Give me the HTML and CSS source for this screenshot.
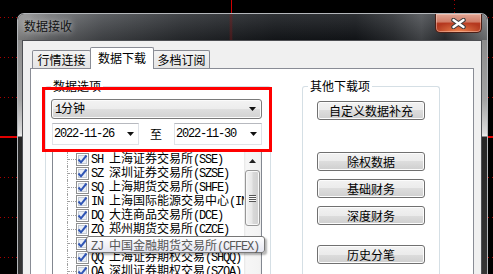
FILE: index.html
```html
<!DOCTYPE html>
<html>
<head>
  <meta charset="utf-8">
  <title>数据接收</title>
  <link rel="stylesheet" href="styles.css">
</head>
<body>
  <svg class="defs" aria-hidden="true">
    <symbol id="chk" viewBox="0 0 13 13">
      <rect x="0.5" y="0.5" width="12" height="12" fill="#fff" stroke="#8e8f8f"/>
      <rect x="2.5" y="2.5" width="8" height="8" fill="#e9eef5" stroke="#c3cad3"/>
      <path d="M2.5 6.5l2.5 2.8L10.5 2.5" fill="none" stroke="#2f55b5" stroke-width="2"/>
    </symbol>
    <symbol id="down" viewBox="0 0 7 4">
      <path d="M0 0h7L3.5 4z"/>
    </symbol>
  </svg>

  <div class="window">
    <div class="titlebar">
      <span class="title">数据接收</span>
      <button class="close-btn" aria-label="关闭">
        <svg viewBox="0 0 15 11" width="15" height="11">
          <path d="M2.5 2l10 7m0-7l-10 7" stroke="#3c3c3c" stroke-width="4.5" stroke-linecap="round"/>
          <path d="M2.5 2l10 7m0-7l-10 7" stroke="#fff" stroke-width="2.4" stroke-linecap="round"/>
        </svg>
      </button>
    </div>

    <div class="frame">
      <div class="client">
        <div class="tabs">
          <div class="tab">行情连接</div>
          <div class="tab active">数据下载</div>
          <div class="tab">多档订阅</div>
        </div>

        <div class="pane">
          <fieldset class="group group-data">
            <legend>数据选项</legend>
            <div class="combo">
              <span><span class="code">1</span>分钟</span>
              <svg class="arrow"><use href="#down"/></svg>
            </div>
            <div class="date-row">
              <div class="date">
                <span class="code">2022-11-26</span>
                <svg class="arrow"><use href="#down"/></svg>
              </div>
              <span class="date-sep">至</span>
              <div class="date">
                <span class="code">2022-11-30</span>
                <svg class="arrow"><use href="#down"/></svg>
              </div>
            </div>
            <div class="tree">
              <ul class="nodes">
                <li class="node"><span class="branch"></span><svg class="chk"><use href="#chk"/></svg><span class="node-text"><span class="code">SH </span>上海证券交易所<span class="code">(SSE)</span></span></li>
                <li class="node"><span class="branch"></span><svg class="chk"><use href="#chk"/></svg><span class="node-text"><span class="code">SZ </span>深圳证券交易所<span class="code">(SZSE)</span></span></li>
                <li class="node"><span class="branch"></span><svg class="chk"><use href="#chk"/></svg><span class="node-text"><span class="code">SQ </span>上海期货交易所<span class="code">(SHFE)</span></span></li>
                <li class="node"><span class="branch"></span><svg class="chk"><use href="#chk"/></svg><span class="node-text"><span class="code">IN </span>上海国际能源交易中心<span class="code">(INE)</span></span></li>
                <li class="node"><span class="branch"></span><svg class="chk"><use href="#chk"/></svg><span class="node-text"><span class="code">DQ </span>大连商品交易所<span class="code">(DCE)</span></span></li>
                <li class="node"><span class="branch"></span><svg class="chk"><use href="#chk"/></svg><span class="node-text"><span class="code">ZQ </span>郑州期货交易所<span class="code">(CZCE)</span></span></li>
                <li class="node"><span class="branch"></span><svg class="chk"><use href="#chk"/></svg><span class="node-text"><span class="code">ZJ </span>中国金融期货交易所<span class="code">(CFFEX)</span></span></li>
                <li class="node"><span class="branch"></span><svg class="chk"><use href="#chk"/></svg><span class="node-text"><span class="code">QQ </span>上海证券期权交易<span class="code">(SHQQ)</span></span></li>
                <li class="node"><span class="branch"></span><svg class="chk"><use href="#chk"/></svg><span class="node-text"><span class="code">QA </span>深圳证券期权交易<span class="code">(SZQA)</span></span></li>
              </ul>
              <div class="vscroll">
                <span class="vscroll-up">
                  <svg viewBox="0 0 7 4" width="7" height="4"><path d="M0 4h7L3.5 0z"/></svg>
                </span>
                <span class="vscroll-thumb"><span class="grip"></span></span>
              </div>
              <div class="tooltip"><span class="code">ZJ </span>中国金融期货交易所<span class="code">(CFFEX)</span></div>
            </div>
          </fieldset>

          <fieldset class="group group-other">
            <legend>其他下载项</legend>
            <div class="btn-set">
              <button class="btn">自定义数据补充</button>
            </div>
            <div class="btn-set btn-set-finance">
              <button class="btn">除权数据</button>
              <button class="btn">基础财务</button>
              <button class="btn">深度财务</button>
            </div>
            <div class="btn-set btn-set-tick">
              <button class="btn">历史分笔</button>
            </div>
          </fieldset>
        </div>
      </div>
    </div>
  </div>

  <div class="mark"></div>
</body>
</html>
```

FILE: styles.css
```css
html, body {
  margin: 0;
  height: 100%;
  overflow: hidden;
}

body {
  position: relative;
  font-family: "Noto Sans CJK SC", sans-serif;
  font-size: 12px;
  line-height: 14px;
  color: #000;
  background:
    linear-gradient(#d00000, #d00000) 231px 0 / 1px 13px no-repeat,
    linear-gradient(#e00000, #e00000) 0 136px / 100% 2px no-repeat,
    conic-gradient(at 1px 1px, transparent 75%, #a80000 0) 0 17px / 4px 40px,
    conic-gradient(at 1px 1px, transparent 75%, #a80000 0) 454px 0 / 493px 4px,
    #000;
}

.defs {
  position: absolute;
  width: 0;
  height: 0;
}

.code {
  font-family: "Liberation Mono", monospace;
  letter-spacing: -1.2px;
}

/* window chrome */

.window {
  position: absolute;
  left: 17px;
  top: 13px;
  width: 471px;
  height: 261px;
  box-sizing: border-box;
  display: flex;
  flex-direction: column;
  border: 1px solid #b4b7bb;
  border-bottom: none;
  border-radius: 7px 7px 0 0;
  overflow: hidden;
}

.titlebar {
  display: flex;
  align-items: flex-start;
  flex-shrink: 0;
  height: 26px;
  background:
    linear-gradient(to right, transparent 211px, rgba(140, 20, 20, 0.45) 213px, transparent 215px),
    linear-gradient(rgba(255, 255, 255, 0.1), rgba(0, 0, 0, 0.2)),
    linear-gradient(to right, #979797, #707275 7%, #4b4e52 18%, #2c2f33 35%, #171a1e 55%, #15181c 72%, #2e3135 80%, #4d5054 86%, #2e3135 91%, #808285);
}

.title {
  padding: 5px 0 0 6px;
  color: #111;
  text-shadow: 0 0 6px rgba(255, 255, 255, 0.6), 0 0 10px rgba(255, 255, 255, 0.35);
}

.close-btn {
  display: flex;
  align-items: center;
  justify-content: center;
  width: 47px;
  height: 19px;
  margin-left: auto;
  margin-right: 5px;
  padding: 0;
  border: 1px solid #4a1f17;
  border-top: none;
  border-radius: 0 0 5px 5px;
  background:
    radial-gradient(ellipse 60% 55% at 50% 100%, rgba(255, 150, 90, 0.85), transparent),
    linear-gradient(#e2a695, #d07c66 45%, #b73a20 50%, #a52e18);
  box-shadow: inset 0 0 0 1px rgba(255, 215, 200, 0.45);
}

.frame {
  flex: 1;
  min-height: 0;
  padding: 0 5px 0 4px;
  background: linear-gradient(#8c8c8c 0, #a4a4a4 60px, #dcdcdc 93px, #efefef 96px, #262626 97px, #353535);
}

.client {
  display: flex;
  flex-direction: column;
  height: 100%;
  box-sizing: border-box;
  padding: 6px 7px 0;
  border: 1px solid #4d4f53;
  border-bottom: none;
  background: #f0f0f0;
}

/* tabs */

.tabs {
  display: flex;
  align-items: flex-end;
  flex-shrink: 0;
  height: 21px;
  padding-left: 2px;
}

.tab {
  width: 59px;
  height: 18px;
  box-sizing: border-box;
  border: 1px solid #898c95;
  border-bottom: none;
  border-radius: 2px 2px 0 0;
  background: linear-gradient(#f3f3f3, #e4e4e4);
  line-height: 17px;
  text-align: center;
}

.tab.active {
  position: relative;
  z-index: 1;
  width: 64px;
  height: 22px;
  margin: 0 -1px -1px -1px;
  background: #fff;
  line-height: 20px;
}

.tab:last-child {
  width: 57px;
}

.pane {
  display: flex;
  align-items: flex-start;
  gap: 31px;
  flex: 1;
  min-height: 0;
  padding-left: 14px;
  border: 1px solid #898c95;
  border-bottom: none;
  background: #fff;
  overflow: hidden;
}

/* group boxes */

.group {
  box-sizing: border-box;
  min-width: 0;
  height: 195px;
  margin: 10px 0 0;
  padding: 6px 8px 0 5px;
  border: 1px solid #d5dfe5;
  border-bottom: none;
  border-radius: 3px 3px 0 0;
}

.group legend {
  padding: 0 2px;
  line-height: 14px;
}

.group-data {
  width: 226px;
}

.group-other {
  width: 138px;
  padding-top: 8px;
}

.arrow {
  width: 7px;
  height: 4px;
  flex-shrink: 0;
  fill: #111;
}

.combo {
  display: flex;
  align-items: center;
  justify-content: space-between;
  height: 20px;
  box-sizing: border-box;
  padding: 0 5px 0 3px;
  border: 1px solid #7a7a7a;
  border-radius: 3px;
  background: linear-gradient(#f3f3f3, #ececec 50%, #dfdfdf 50%, #d2d2d2);
  box-shadow: inset 0 0 0 1px #fbfbfb;
}

.date-row {
  display: flex;
  align-items: center;
  height: 22px;
  margin: 4px 0 0 1px;
}

.date {
  display: flex;
  align-items: center;
  justify-content: space-between;
  width: 87px;
  height: 22px;
  box-sizing: border-box;
  padding: 0 4px 0 1px;
  border: 1px solid #dfe2e7;
  border-top-color: #b7b9bf;
  background: #fff;
}

.date:last-child {
  width: 88px;
}

.date-sep {
  margin: 0 12px 0 11px;
}

/* tree view */

.tree {
  position: relative;
  display: flex;
  width: 210px;
  height: 123px;
  box-sizing: border-box;
  margin: 6px 0 0 1px;
  border: 1px solid #828790;
  border-bottom: none;
  background: #fff;
}

.nodes {
  flex: 1;
  min-width: 0;
  margin: 0;
  padding: 0;
  list-style: none;
  overflow: hidden;
}

.node {
  display: flex;
  align-items: center;
  height: 14px;
  white-space: nowrap;
}

.branch {
  flex-shrink: 0;
  align-self: stretch;
  width: 8px;
  margin-left: 14px;
  border-left: 1px dotted #a0a0a0;
}

.branch::after {
  content: "";
  display: block;
  margin-top: 7px;
  border-top: 1px dotted #a0a0a0;
}

.chk {
  flex-shrink: 0;
  width: 13px;
  height: 13px;
}

.node-text {
  margin-left: 2px;
}

.vscroll {
  display: flex;
  flex-direction: column;
  align-items: center;
  flex-shrink: 0;
  width: 17px;
  background: linear-gradient(to right, #e6e6e6, #f6f6f6 2px, #f3f3f3 90%, #ebebeb);
}

.vscroll-up {
  display: flex;
  align-items: center;
  justify-content: center;
  height: 17px;
  fill: #222;
}

.vscroll-thumb {
  display: flex;
  align-items: center;
  justify-content: center;
  width: 15px;
  height: 56px;
  box-sizing: border-box;
  margin-top: 1px;
  border: 1px solid #979797;
  border-radius: 3px;
  background: linear-gradient(to right, #f4f4f4, #e7e7e7 45%, #d8d8d8 55%, #d0d0d0);
  box-shadow: inset 0 0 0 1px #f8f8f8;
}

.grip {
  width: 7px;
  height: 7px;
  background: repeating-linear-gradient(#555 0 1px, #fafafa 1px 2px);
}

.tooltip {
  position: absolute;
  left: 33px;
  top: 84px;
  z-index: 2;
  height: 17px;
  box-sizing: border-box;
  padding: 0 5px 0 4px;
  border: 1px solid #767676;
  border-radius: 3px;
  background: linear-gradient(#fff, #e4e5f0);
  color: #575757;
  line-height: 15px;
  white-space: nowrap;
  box-shadow: 2px 2px 2px rgba(0, 0, 0, 0.3);
}

/* buttons */

.btn-set {
  display: flex;
  flex-direction: column;
  gap: 8px;
  margin-left: 9px;
}

.btn-set-finance {
  margin-top: 32px;
}

.btn-set-tick {
  margin-top: 20px;
}

.btn {
  width: 108px;
  height: 19px;
  padding: 0;
  font: inherit;
  line-height: 17px;
  color: #000;
  border: 1px solid #707070;
  border-radius: 3px;
  background: linear-gradient(#f2f2f2, #ebebeb 50%, #dddddd 50%, #cfcfcf);
  box-shadow: inset 0 0 0 1px #fcfcfc;
}

/* annotation */

.mark {
  position: absolute;
  left: 42px;
  top: 87px;
  width: 230px;
  height: 65px;
  box-sizing: border-box;
  border: 3px solid #f00;
}
```
